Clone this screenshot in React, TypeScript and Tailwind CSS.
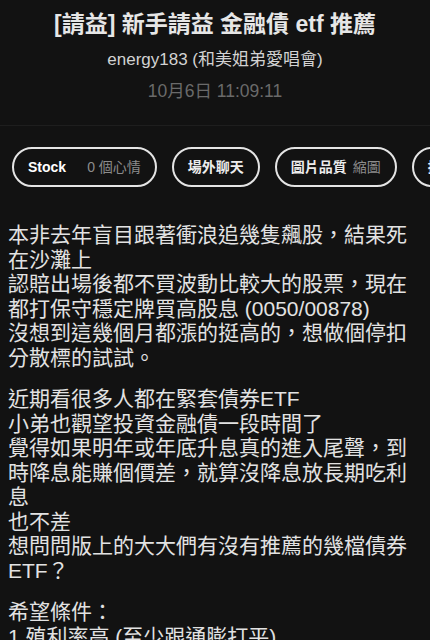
import { ReactNode } from 'react';

const FONT = '"Liberation Sans", "Noto Sans CJK TC", sans-serif';

function Pill({ children }: { children: ReactNode }) {
  return (
    <div className="shrink-0 h-[40px] rounded-full border-2 border-[#e4e4e4] px-[14px] flex items-center text-[14px] whitespace-nowrap">
      {children}
    </div>
  );
}

export default function App() {
  return (
    <div className="h-[640px] w-full overflow-hidden bg-[#121212] text-[#e2e2e2]" style={{ fontFamily: FONT }}>
      <header className="pt-[9px] pb-[22px] border-b border-[#1e1e1e] flex flex-col items-center">
        <h1 className="text-[23px] leading-[30px] font-bold text-[#e6e6e6]">[請益] 新手請益 金融債 etf 推薦</h1>
        <p className="mt-[9px] text-[17px] leading-[24px] text-[#d2d2d2]">energy183 (和美姐弟愛唱會)</p>
        <p className="mt-[7px] text-[17.5px] leading-[24px] text-[#6a6a6a]">10月6日 11:09:11</p>
      </header>

      <div className="mt-[21px] flex gap-[15px] pl-3 overflow-hidden">
        <Pill>
          <span className="font-bold text-white">Stock</span>
          <span className="ml-[21px] text-[#8c8c8c]">0 個心情</span>
        </Pill>
        <Pill>
          <span className="font-bold text-[#ececec]">場外聊天</span>
        </Pill>
        <Pill>
          <span className="font-bold text-[#ececec]">圖片品質</span>
          <span className="ml-[6px] text-[#8c8c8c]">縮圖</span>
        </Pill>
        <Pill>
          <span className="font-bold text-[#ececec]">推文排序</span>
        </Pill>
      </div>

      <article className="mt-[36px] px-2 text-[21px] leading-[24.5px] text-[#e2e2e2]">
        <p className="mb-[17px]">
          本非去年盲目跟著衝浪追幾隻飆股，結果死在沙灘上
          <br />
          認賠出場後都不買波動比較大的股票，現在都打保守穩定牌買高股息 (0050/00878)
          <br />
          沒想到這幾個月都漲的挺高的，想做個停扣分散標的試試。
        </p>
        <p className="mb-[17px]">
          近期看很多人都在緊套債券ETF
          <br />
          小弟也觀望投資金融債一段時間了
          <br />
          覺得如果明年或年底升息真的進入尾聲，到時降息能賺個價差，就算沒降息放長期吃利息
          <br />
          也不差
          <br />
          想問問版上的大大們有沒有推薦的幾檔債券ETF？
        </p>
        <p>
          希望條件：
          <br />
          1.殖利率高 (至少跟通膨打平)
          <br />
          2.穩定配息
        </p>
      </article>
    </div>
  );
}
